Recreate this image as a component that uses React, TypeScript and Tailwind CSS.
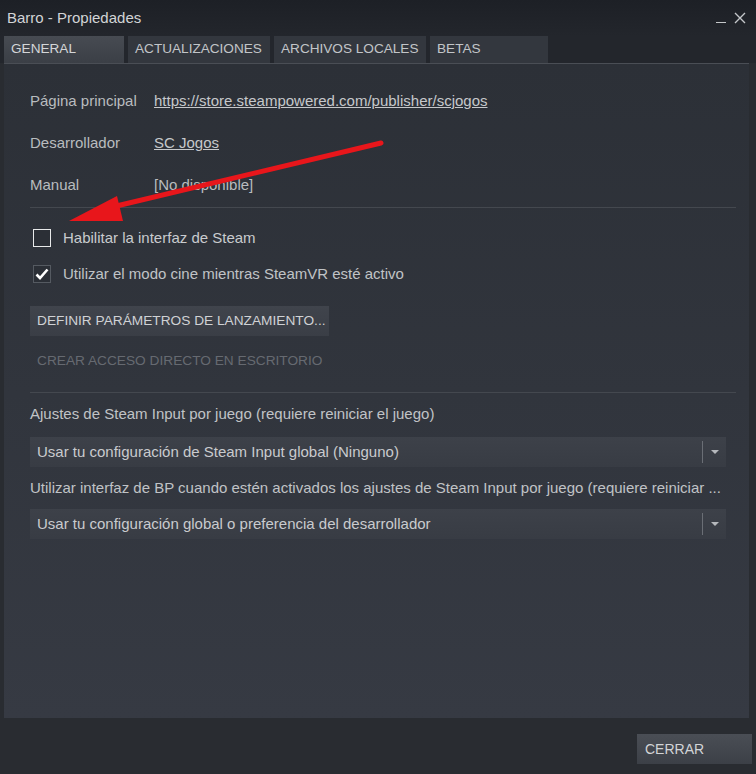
const font = { fontFamily: '"Liberation Sans", Arial, sans-serif' };

const Tab = ({ label, w, active }: { label: string; w: string; active?: boolean }) => (
  <div
    className={`${w} h-[27px] flex items-center pl-[7px] text-[13.6px] whitespace-nowrap ${
      active ? 'bg-linear-to-b from-[#474b52] to-[#3b3f46] text-[#d4d6d8]' : 'bg-[#33373e] text-[#c2c5c8]'
    }`}
  >
    {label}
  </div>
);

const InfoRow = ({ label, value, link }: { label: string; value: string; link?: boolean }) => (
  <div className="flex items-center h-[42px] text-[15px]">
    <span className="w-[124px] text-[#b9bcbf]">{label}</span>
    <span className={link ? 'underline text-[#c6c8cb]' : 'text-[#b9bcbf]'}>{value}</span>
  </div>
);

const Select = ({ text }: { text: string }) => (
  <div className="flex items-center h-[30px] w-[696px] bg-linear-to-b from-[#3d4149] to-[#383c44] text-[15px] text-[#c9cbce]">
    <span className="flex-1 pl-[7px]">{text}</span>
    <div className="w-px h-[22px] bg-[#6a6e75]" />
    <div className="w-[23px] flex justify-center">
      <div className="w-0 h-0 border-l-[4px] border-r-[4px] border-t-[4px] border-l-transparent border-r-transparent border-t-[#b5b8bc]" />
    </div>
  </div>
);

export default function App() {
  return (
    <div className="relative w-[756px] h-[774px] bg-[#292c31] overflow-hidden" style={font}>
      {/* title bar */}
      <div className="h-[36px] flex items-center justify-between bg-linear-to-b from-[#1d2026] to-[#23262c] pl-[7px] pr-[10px]">
        <span className="text-[15px] text-[#d2d4d6]">Barro - Propiedades</span>
        <div className="flex items-center gap-[8px] text-[#c4c7ca]">
          <div className="w-[10px] h-px bg-[#c4c7ca] mt-[8px]" />
          <svg width="12" height="12" viewBox="0 0 12 12">
            <path d="M1 1L11 11M11 1L1 11" stroke="#c4c7ca" strokeWidth="1.4" />
          </svg>
        </div>
      </div>

      {/* tabs */}
      <div className="flex gap-[4px] pl-[4px] bg-[#23262c]">
        <Tab label="GENERAL" w="w-[120px]" active />
        <Tab label="ACTUALIZACIONES" w="w-[142px]" />
        <Tab label="ARCHIVOS LOCALES" w="w-[152px]" />
        <Tab label="BETAS" w="w-[118px]" />
      </div>

      {/* panel */}
      <div className="ml-[4px] w-[745px] h-[655px] bg-linear-to-b from-[#2c3037] to-[#363a43] border-t border-[#4a4e55] pl-[26px] pt-[16px]">
        <InfoRow label="Página principal" value="https://store.steampowered.com/publisher/scjogos" link />
        <InfoRow label="Desarrollador" value="SC Jogos" link />
        <InfoRow label="Manual" value="[No disponible]" />
        <div className="h-px w-[706px] bg-[#44484f] mt-[1px]" />

        <div className="flex items-center gap-[12px] mt-[21px] h-[18px] pl-[3px] text-[15px] text-[#c9cbce]">
          <div className="w-[18px] h-[18px] border-[1.5px] border-[#e8e9ea] bg-[#2b2f36]" />
          <span>Habilitar la interfaz de Steam</span>
        </div>
        <div className="flex items-center gap-[12px] mt-[18px] h-[18px] pl-[3px] text-[15px] text-[#c0c3c6]">
          <div className="w-[18px] h-[18px] border border-[#555a61] bg-[#2b2f36] flex items-center justify-center">
            <svg width="14" height="12" viewBox="0 0 14 12">
              <path d="M1.5 6.5L5 10L12.5 1.5" fill="none" stroke="#ffffff" strokeWidth="2.6" />
            </svg>
          </div>
          <span>Utilizar el modo cine mientras SteamVR esté activo</span>
        </div>

        <div className="mt-[23px] w-[299px] h-[30px] flex items-center pl-[7px] bg-linear-to-b from-[#40444c] to-[#3a3e46] text-[13.7px] text-[#d0d2d5] whitespace-nowrap">
          DEFINIR PARÁMETROS DE LANZAMIENTO...
        </div>
        <div className="mt-[10px] h-[30px] flex items-center pl-[7px] text-[13.7px] text-[#666a71] whitespace-nowrap">
          CREAR ACCESO DIRECTO EN ESCRITORIO
        </div>
        <div className="h-px w-[706px] bg-[#44484f] mt-[16px]" />

        <div className="mt-[12px] h-[18px] flex items-center text-[15px] text-[#c0c3c6]">
          Ajustes de Steam Input por juego (requiere reiniciar el juego)
        </div>
        <div className="mt-[14px]">
          <Select text="Usar tu configuración de Steam Input global (Ninguno)" />
        </div>
        <div className="mt-[12px] h-[18px] flex items-center text-[15px] text-[#c0c3c6] whitespace-nowrap">
          Utilizar interfaz de BP cuando estén activados los ajustes de Steam Input por juego (requiere reiniciar ...
        </div>
        <div className="mt-[12px]">
          <Select text="Usar tu configuración global o preferencia del desarrollador" />
        </div>
      </div>

      {/* footer */}
      <div className="flex justify-end pr-[4px] pt-[16px]">
        <div className="w-[115px] h-[30px] flex items-center pl-[8px] bg-linear-to-b from-[#4a4e55] to-[#3c4047] text-[14px] text-[#d2d4d6]">
          CERRAR
        </div>
      </div>

      {/* red annotation arrow */}
      <svg className="absolute left-0 top-0 pointer-events-none" width="756" height="774">
        <line x1="381" y1="143" x2="108" y2="208" stroke="#e8161b" strokeWidth="5" strokeLinecap="round" />
        <polygon points="69,221 117,196 123,221" fill="#e8161b" />
      </svg>
    </div>
  );
}
